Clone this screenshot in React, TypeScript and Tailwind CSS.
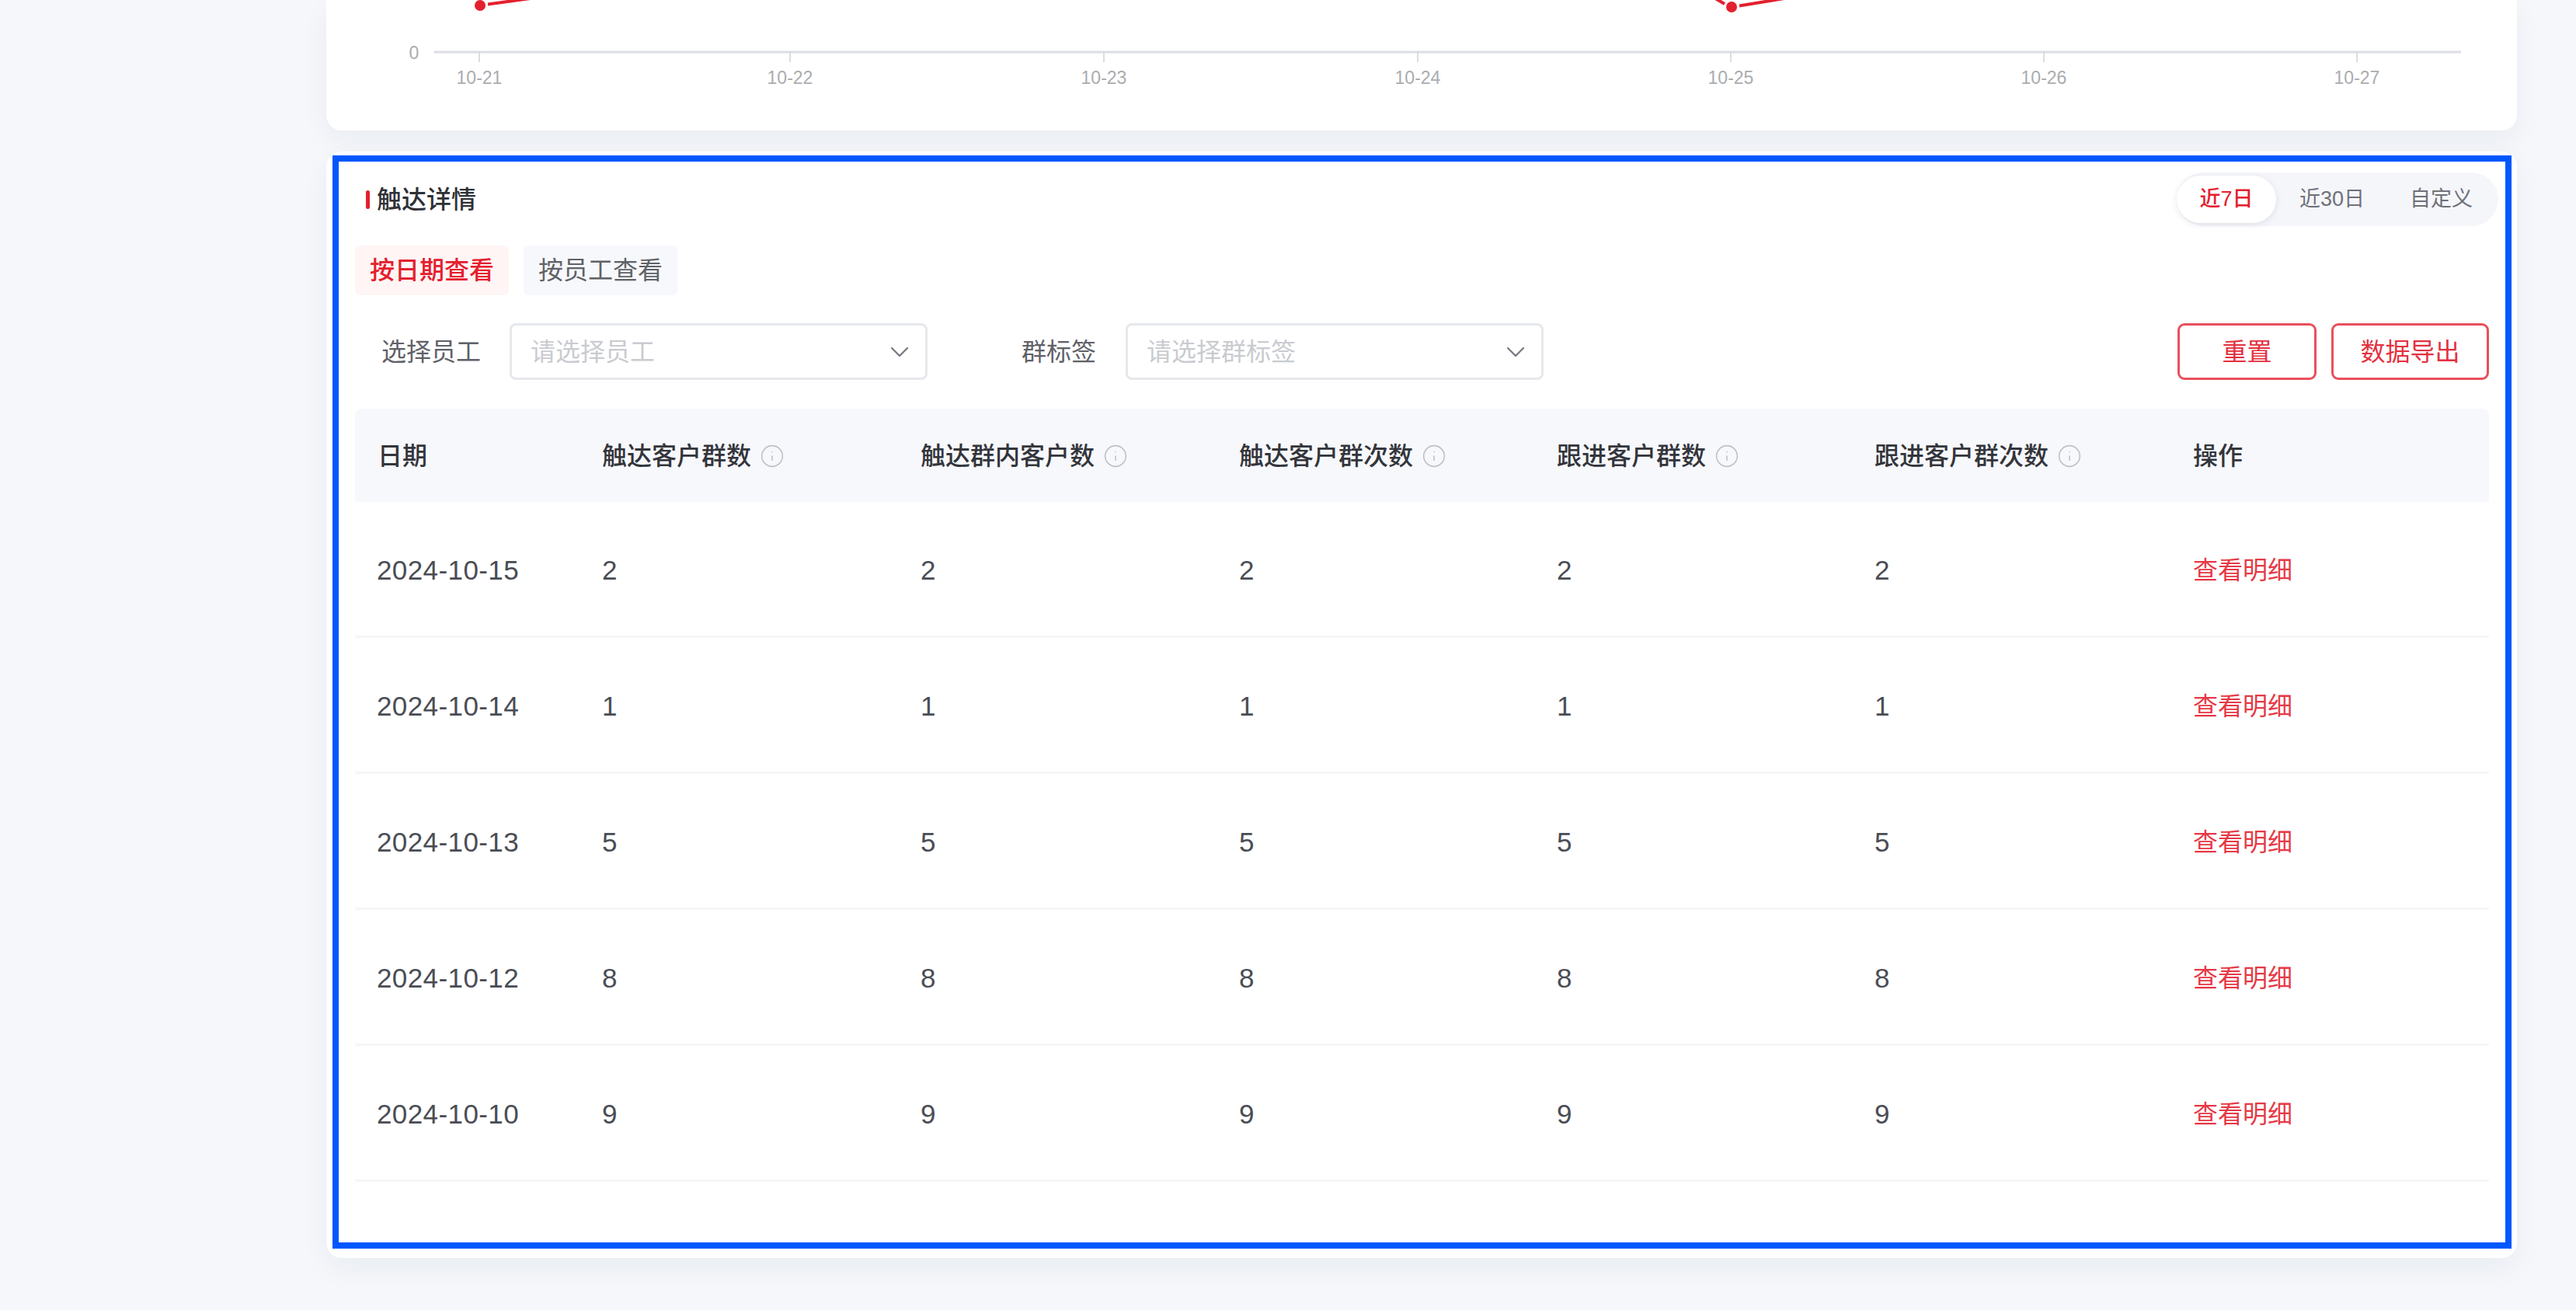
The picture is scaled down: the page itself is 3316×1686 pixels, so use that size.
import { ChevronDown, Info } from "lucide-react";

const FONT = "font-['Liberation_Sans','Noto_Sans_CJK_SC',sans-serif]";

const rows = [
  { date: "2024-10-15", value: 2 },
  { date: "2024-10-14", value: 1 },
  { date: "2024-10-13", value: 5 },
  { date: "2024-10-12", value: 8 },
  { date: "2024-10-10", value: 9 },
];

const columns = ["触达客户群数", "触达群内客户数", "触达客户群次数", "跟进客户群数", "跟进客户群次数"];

const ticks = [
  { x: 617, label: "10-21" },
  { x: 1017, label: "10-22" },
  { x: 1421, label: "10-23" },
  { x: 1825, label: "10-24" },
  { x: 2228, label: "10-25" },
  { x: 2631, label: "10-26" },
  { x: 3034, label: "10-27" },
];

const GRID = "grid grid-cols-[287px_410px_410px_409px_409px_410px_1fr]";

function Chart() {
  return (
    <svg viewBox="420 0 2820 168" className="block w-full h-[168px]">
      <text x="533" y="76" textAnchor="middle" fontSize="23" fill="#aaacb0" fontFamily="Liberation Sans">
        0
      </text>
      <line x1="559" y1="67" x2="3168" y2="67" stroke="#dcdee6" strokeWidth="3" />
      {ticks.map((t) => (
        <g key={t.x}>
          <line x1={t.x} y1="67" x2={t.x} y2="80" stroke="#d0d2da" strokeWidth="1.5" />
          <text x={t.x} y="108" textAnchor="middle" fontSize="23" fill="#aaacb0" fontFamily="Liberation Sans">
            {t.label}
          </text>
        </g>
      ))}
      {/* Line segments cut by the top of the page */}
      <line x1="628" y1="5.5" x2="690" y2="-3" stroke="#e4202e" strokeWidth="4" />
      <line x1="2220" y1="5" x2="2208" y2="-2" stroke="#e4202e" strokeWidth="4" />
      <line x1="2239" y1="7.5" x2="2297" y2="-2" stroke="#e4202e" strokeWidth="4" />
      <circle cx="618" cy="7" r="7" fill="#e4202e" />
      <circle cx="2229" cy="9" r="7" fill="#e4202e" />
    </svg>
  );
}

function Select({ placeholder, className }: { placeholder: string; className: string }) {
  return (
    <div
      className={`h-[73px] flex items-center justify-between rounded-[8px] border-[3px] border-[#e6e8ec] bg-white pl-[24px] pr-[13px] ${className}`}
    >
      <span className="text-[32px] text-[#c9cbd0]">{placeholder}</span>
      <ChevronDown size={40} strokeWidth={1.3} className="text-[#74777f]" />
    </div>
  );
}

export default function App() {
  return (
    <div className={`${FONT} min-h-[1686px] h-[1686px] overflow-hidden bg-[#f5f7fb] pl-[420px] pr-[76px]`}>
      {/* Chart card, scrolled past the top of the page */}
      <div className="h-[168px] bg-white rounded-b-[20px] shadow-[0_14px_36px_rgba(25,30,60,0.05)]">
        <Chart />
      </div>

      {/* Detail card */}
      <div className="mt-[27px] h-[1424px] bg-white rounded-[20px] pt-[5px] pl-[8px] pr-[7px] shadow-[0_14px_36px_rgba(25,30,60,0.05)]">
        <div className="h-[1407px] border-[8px] border-[#0057ff] pt-[14px] pl-[21px] pr-[21px]">
          <div className="flex items-center justify-between pl-[14px] mr-[-12px]">
            <div className="flex items-center gap-[9px]">
              <span className="w-[5px] h-[24px] rounded-full bg-[#e4202e]" />
              <h2 className="text-[32px] font-medium text-[#2f3136]">触达详情</h2>
            </div>
            <div className="h-[69px] w-[414px] flex items-center rounded-full bg-[#f5f6fa] text-[27px] text-[#6e7178]">
              <span className="h-[61px] w-[128px] flex items-center justify-center rounded-full bg-white text-[#e4202e] font-medium shadow-[0_2px_8px_rgba(20,30,60,0.1)]">
                近7日
              </span>
              <span className="ml-[30px]">近30日</span>
              <span className="ml-[58px]">自定义</span>
            </div>
          </div>

          <div className="mt-[25px] flex gap-[19px] text-[32px]">
            <button className="h-[64px] w-[198px] rounded-[6px] bg-[#fff5f5] font-medium text-[#e4202e]">
              按日期查看
            </button>
            <button className="h-[64px] w-[198px] rounded-[6px] bg-[#f7f8fc] text-[#606266]">按员工查看</button>
          </div>

          <div className="mt-[36px] flex items-center text-[32px]">
            <span className="ml-[34px] w-[128px] text-[#5f6168]">选择员工</span>
            <Select placeholder="请选择员工" className="ml-[37px] w-[538px]" />
            <span className="ml-[121px] w-[96px] text-[#5f6168]">群标签</span>
            <Select placeholder="请选择群标签" className="ml-[38px] w-[538px]" />
            <button className="ml-auto h-[73px] w-[179px] rounded-[9px] border-[3px] border-[#e9505c] text-[#e4303e]">
              重置
            </button>
            <button className="ml-[19px] h-[73px] w-[203px] rounded-[9px] border-[3px] border-[#e9505c] text-[#e4303e]">
              数据导出
            </button>
          </div>

          <div className="mt-[37px]">
            <div className={`${GRID} h-[120px] pt-[2px] items-center rounded-t-[8px] bg-[#f7f8fc] text-[32px] font-medium text-[#33353b]`}>
              <div className="pl-[29px]">日期</div>
              {columns.map((c) => (
                <div key={c} className="pl-[31px] flex items-center gap-[11px]">
                  {c}
                  <Info size={32} strokeWidth={1.2} className="text-[#bfc1c7]" />
                </div>
              ))}
              <div className="pl-[31px]">操作</div>
            </div>

            {rows.map((r) => (
              <div key={r.date} className={`${GRID} h-[175px] pt-[4px] items-center border-b-[3px] border-[#f5f6f7] text-[35px] text-[#4a4d55]`}>
                <div className="pl-[28px] tracking-[0.4px]">{r.date}</div>
                {columns.map((c) => (
                  <div key={c} className="pl-[31px]">
                    {r.value}
                  </div>
                ))}
                <a className="pl-[31px] text-[32px] text-[#e63946]">查看明细</a>
              </div>
            ))}
          </div>
        </div>
      </div>
    </div>
  );
}
